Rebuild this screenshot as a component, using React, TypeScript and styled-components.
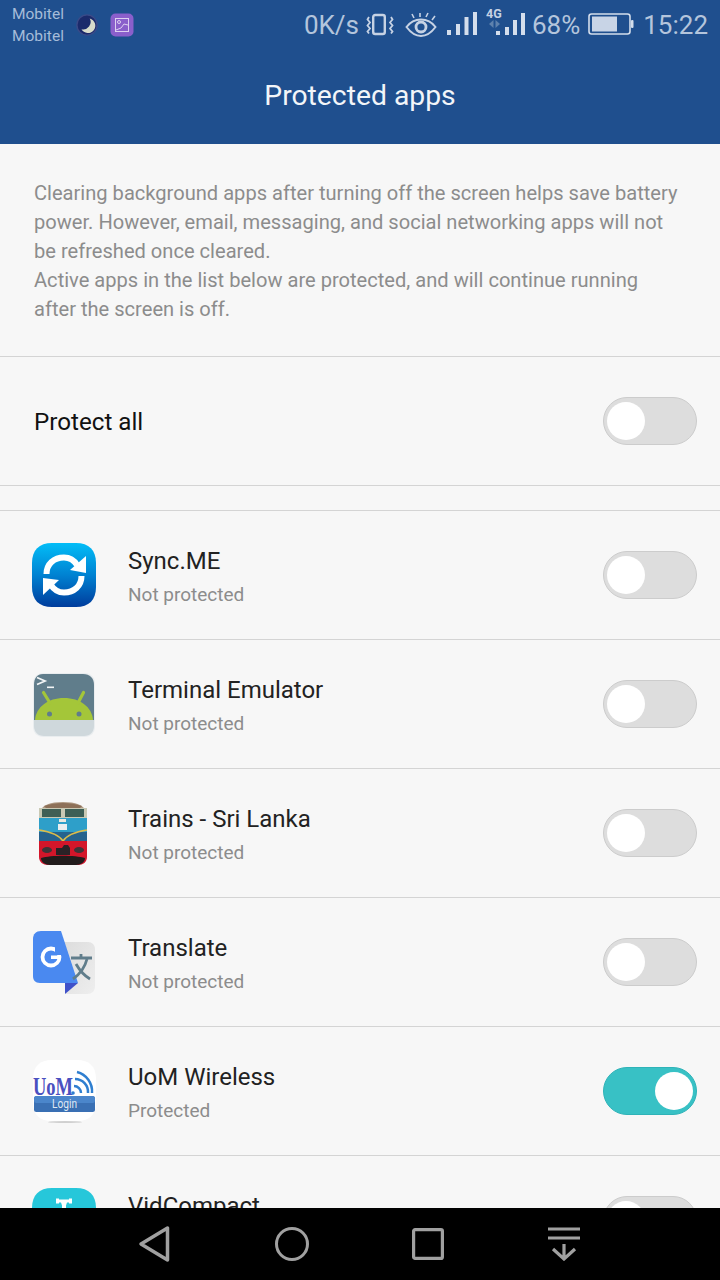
import React from "react";
import styled, { createGlobalStyle } from "styled-components";

const Global = createGlobalStyle`
  html, body { margin: 0; padding: 0; background: #f7f7f7; }
  * { box-sizing: border-box; }
`;

const Screen = styled.div`
  width: 720px; height: 1280px; display: flex; flex-direction: column; overflow: hidden;
  background: #f7f7f7; font-family: Roboto, "Liberation Sans", sans-serif;
`;
const Top = styled.header`
  height: 144px; flex: none; background: #1f4f8e; display: flex; flex-direction: column;
`;
const StatusBar = styled.div`
  height: 48px; flex: none; display: flex; align-items: center; padding: 2px 12px 0 12px; color: #c6d2e4;
`;
const Carriers = styled.div`
  display: flex; flex-direction: column; font-size: 15.5px; line-height: 22px; color: #a5bcd9; margin-top: -1px;
`;
const StatusLeft = styled.div`
  display: flex; align-items: center; gap: 12px; flex: 1;
`;
const StatusRight = styled.div`
  display: flex; align-items: center; font-size: 26px; color: #b4c5dc;
`;
const Gap = styled.span<{ $w: number }>`
  display: inline-block; width: ${(p) => p.$w}px;
`;
const Title = styled.h1`
  margin: 0; text-align: center; font-size: 28.3px; font-weight: 400; color: #f2f5f9; line-height: 96px;
`;
const Scroll = styled.main`
  flex: 1; min-height: 0; overflow: hidden;
`;
const Intro = styled.section`
  height: 213px; padding: 35px 38px 0 34px; border-bottom: 1px solid #d4d4d4; font-size: 20.1px; line-height: 29px; color: #8c8c8c;
`;
const ProtectRow = styled.div`
  height: 129px; display: flex; align-items: center; justify-content: space-between; padding: 0 23px 0 34px;
  border-bottom: 1px solid #d4d4d4;
`;
const ProtectLabel = styled.span`
  font-size: 24.2px; color: #111; margin-top: 2px;
`;
const Spacer = styled.div`
  height: 25px; border-bottom: 1px solid #d4d4d4;
`;
const AppRow = styled.div`
  height: 129px; display: flex; align-items: center; padding: 0 23px 0 32px; border-bottom: 1px solid #d4d4d4;
`;
const AppIcon = styled.div`
  width: 64px; height: 64px; flex: none; margin-right: 32px;
  svg { display: block; overflow: visible; }
`;
const AppText = styled.div`
  flex: 1; display: flex; flex-direction: column; margin-top: 2px;
`;
const AppName = styled.div`
  font-size: 24px; line-height: 34px; color: #222;
`;
const AppSub = styled.div`
  font-size: 19px; line-height: 28px; color: #8c8c8c; margin-top: 3px;
`;
const Toggle = styled.div<{ $on?: boolean }>`
  width: 94px; height: 48px; flex: none; border-radius: 24px; display: flex; align-items: center; padding: 0 3px;
  justify-content: ${(p) => (p.$on ? "flex-end" : "flex-start")};
  background: ${(p) => (p.$on ? "#38c1c5" : "#dddddd")};
  border: 1px solid ${(p) => (p.$on ? "#2fb3b8" : "#cccccc")};
`;
const Knob = styled.div`
  width: 38px; height: 38px; border-radius: 50%; background: #fff;
`;
const NavBar = styled.nav`
  height: 72px; flex: none; background: #000; display: flex; align-items: center; padding: 0 0 0 136px;
`;
const NavSlot = styled.div<{ $w: number }>`
  width: ${(p) => p.$w}px; flex: none; display: flex; svg { display: block; }
`;

const Moon = () => (
  <svg width="22" height="22" viewBox="0 0 24 24">
    <circle cx="12" cy="12" r="11" fill="#1b2a6b" stroke="#3a4a88" strokeWidth="1.5" />
    <path d="M15 5a8 8 0 0 1-9 11.5A8 8 0 1 0 15 5z" fill="#d8dccb" />
  </svg>
);
const Gallery = () => (
  <svg width="24" height="24" viewBox="0 0 24 24">
    <rect x="0.5" y="0.5" width="23" height="23" rx="5" fill="#8a5fcb" />
    <rect x="5.5" y="5.5" width="13" height="13" fill="none" stroke="#dcd0f0" strokeWidth="1" />
    <circle cx="9" cy="9" r="1.5" fill="none" stroke="#dcd0f0" />
    <path d="M6 17l5-2 3-4 4 1" fill="none" stroke="#dcd0f0" />
  </svg>
);
const Vibrate = () => (
  <svg width="28" height="24" viewBox="0 0 28 24" fill="none" stroke="#c6d2e4">
    <rect x="7.2" y="2" width="11.6" height="19" rx="2" strokeWidth="2.4" />
    <path d="M3 4l-1.500 2.500 2.500 3-2.500 3 2.500 3-2.500 3 1.500 2M25 4l1.500 2.500-2.500 3 2.500 3-2.500 3 2.500 3-1.500 2" strokeWidth="1.800" />
  </svg>
);
const Eye = () => (
  <svg width="32" height="26" viewBox="0 0 32 26" fill="none" stroke="#c6d2e4" strokeWidth="2">
    <path d="M1.500 15C6 9 11 7.500 16 7.500S26 9 30.500 15C26 21 21 24 16 24S6 21 1.500 15z" />
    <circle cx="16" cy="15" r="5" strokeWidth="2.800" />
    <path d="M9 6L7 2M15 5V1M21 5l2-4M27 8l3-4" strokeWidth="1.600" />
  </svg>
);
const Signal = () => (
  <svg width="30" height="26" viewBox="0 0 30 26" fill="#d4deec">
    <rect x="0" y="18" width="4" height="5" />
    <rect x="9" y="12" width="4" height="11" />
    <rect x="17.500" y="5" width="4" height="18" />
    <rect x="26" y="0" width="4" height="23" />
  </svg>
);
const Signal4G = () => (
  <svg width="39" height="40" viewBox="0 0 39 40">
    <text x="0" y="13" fontFamily="Roboto, sans-serif" fontWeight="700" fontSize="12.500" fill="#c6d2e4">4G</text>
    <path d="M7.500 15v8l-4.500-4zM9.500 15v8l4.500-4z" fill="#5f82ad" />
    <g fill="#d4deec">
      <rect x="10" y="26" width="4" height="4" />
      <rect x="19" y="22" width="4" height="8" />
      <rect x="27" y="15" width="4" height="15" />
      <rect x="35" y="8" width="4" height="22" />
    </g>
  </svg>
);
const Battery = () => (
  <svg width="46" height="24" viewBox="0 0 46 24">
    <rect x="1" y="1" width="41" height="20" rx="2.500" fill="none" stroke="#d4deec" strokeWidth="1.600" />
    <rect x="4" y="3.500" width="25" height="15" fill="#c8d4e6" />
    <rect x="43" y="7" width="2.500" height="8" rx="1" fill="#d4deec" />
  </svg>
);

const SyncIcon = () => (
  <svg width="64" height="64" viewBox="0 0 64 64">
    <defs>
      <linearGradient id="syncG" x1="0" y1="0" x2="0" y2="1">
        <stop offset="0" stopColor="#02bdf7" />
        <stop offset="0.5" stopColor="#0082d2" />
        <stop offset="1" stopColor="#003c9c" />
      </linearGradient>
    </defs>
    <path d="M20 0H44C57 0 64 7 64 20V44C64 57 57 64 44 64H20C7 64 0 57 0 44V20C0 7 7 0 20 0Z" fill="url(#syncG)" />
    <g fill="none" stroke="#fff" strokeWidth="6">
      <path d="M14.500 31C14.500 21 22 14.500 32 14.500C38 14.500 42 17 45 22" />
      <path d="M49.500 33C49.500 43 42 49.500 32 49.500C26 49.500 22 47 19 42" />
    </g>
    <path d="M54 13V30L38 27z" fill="#fff" />
    <path d="M11 52V35L27 37z" fill="#fff" />
  </svg>
);
const TerminalIcon = () => (
  <svg width="64" height="64" viewBox="0 0 64 64">
    <path d="M12 1H52C59 1 63 5 63 12V54C63 61 59 65 52 65H12C5 65 1 61 1 54V12C1 5 5 1 12 1Z" fill="#e9edef" />
    <path d="M11 2H51C58 2 62 6 62 13V48H2V13C2 6 5 2 11 2Z" fill="#607d8b" />
    <path d="M2 48H62V54C62 60 58 64 52 64H12C6 64 2 60 2 54Z" fill="#cfd8dc" />
    <path d="M5 5.500l8 3.500-8 3.500" fill="none" stroke="#f2f5f6" strokeWidth="1.800" />
    <rect x="15" y="14.500" width="7" height="1.600" fill="#f2f5f6" />
    <path d="M3 48C4 35 16 26 32 26S60 35 61 48Z" fill="#a4c639" />
    <path d="M18 31L11.500 20.500M46 31L51.500 20.500" stroke="#a4c639" strokeWidth="3.200" strokeLinecap="round" />
    <circle cx="17.500" cy="42" r="2.500" fill="#607d8b" />
    <circle cx="47" cy="42" r="2.500" fill="#607d8b" />
  </svg>
);
const TrainIcon = () => (
  <svg width="64" height="64" viewBox="0 0 64 64">
    <defs>
      <filter id="soft"><feGaussianBlur stdDeviation="0.5" /></filter>
    </defs>
    <g filter="url(#soft)">
      <path d="M8 10C11 4 18 1 31 1S51 4 54 10V17H8z" fill="#b09a84" />
      <path d="M12 5C18 3 24 2 31 2S44 3 50 5L48 7H14z" fill="#8d6f58" />
      <rect x="7" y="7" width="48" height="10" fill="#c9c9b4" />
      <rect x="10" y="8" width="19" height="8" fill="#3f5f55" />
      <rect x="33" y="8" width="19" height="8" fill="#3d5f57" />
      <rect x="7" y="17" width="48" height="14" fill="#2f9fc9" />
      <rect x="7" y="31" width="48" height="9" fill="#27638e" />
      <path d="M7 29C20 31 27 34 31 40C35 34 42 31 55 29" fill="none" stroke="#dcbc4a" strokeWidth="1.500" />
      <path d="M7 40H55V56C55 61 51 64 46 64H16C11 64 7 61 7 56Z" fill="#d3142c" />
      <ellipse cx="15" cy="49" rx="5" ry="3" fill="#3c3438" />
      <ellipse cx="47" cy="49" rx="5" ry="3" fill="#3c3438" />
      <path d="M24 47h6l2-3h4l2 3v7H24z" fill="#2a2226" />
      <path d="M9 57C19 54 43 54 53 57C53 61 49 64 44 64H18C13 64 9 61 9 57Z" fill="#221c1e" />
      <rect x="26" y="23" width="9" height="6" fill="#e8eef0" />
      <rect x="27" y="18" width="7" height="3" fill="#e8e8e0" />
    </g>
  </svg>
);
const TranslateIcon = () => (
  <svg width="64" height="64" viewBox="0 0 64 64">
    <defs>
      <linearGradient id="pageG" x1="0" y1="0" x2="1" y2="1">
        <stop offset="0" stopColor="#dcdcdc" />
        <stop offset="1" stopColor="#eeeeee" />
      </linearGradient>
    </defs>
    <path d="M30 12H56C60 12 63 15 63 19V56C63 61 60 64 55 64H34z" fill="url(#pageG)" />
    <path d="M33 53H46L33 64z" fill="#3f51c9" />
    <path d="M9 1H29L46 53H8C3 53 1 50 1 46V9C1 4 4 1 9 1Z" fill="#4a89f0" />
    <circle cx="19" cy="27" r="8.500" fill="none" stroke="#fff" strokeWidth="3.800" />
    <rect x="19" y="25.500" width="10" height="3.500" fill="#fff" />
    <rect x="23" y="17" width="7" height="8" fill="#4a89f0" />
    <g fill="none" stroke="#607d8b" strokeWidth="2.800">
      <path d="M39 28H60M49 24V28" />
      <path d="M41 49C48 44 53 37 55 29M44 34C48 41 53 46 58 49" />
    </g>
  </svg>
);
const UomIcon = () => (
  <svg width="64" height="64" viewBox="0 0 64 64">
    <path d="M20 1H45C57 1 64 7 64 20V44C64 56 57 62 45 62H20C8 62 1 56 1 44V20C1 7 8 1 20 1Z" fill="#fff" />
    <ellipse cx="33" cy="63" rx="17" ry="0.800" fill="#c4c4c4" />
    <text x="1" y="36" fontFamily="Liberation Serif, serif" fontWeight="700" fontSize="25" fill="#4a50c0" textLength="40" lengthAdjust="spacingAndGlyphs">UoM</text>
    <circle cx="41" cy="34" r="1.800" fill="#2f7fd0" />
    <g fill="none" stroke="#2f7fd0" strokeWidth="2.500">
      <path d="M42 27a7 7 0 0 1 7 7" />
      <path d="M43 20a13 13 0 0 1 13 14" />
      <path d="M45 13a20 20 0 0 1 15 21" />
    </g>
    <rect x="2" y="37" width="61" height="16" rx="2.500" fill="#3a70b4" />
    <rect x="2" y="37" width="61" height="7" rx="2.500" fill="#4b86cb" />
    <text x="20" y="49" fontFamily="Roboto, sans-serif" fontSize="12" fill="#dfe8f3" textLength="25" lengthAdjust="spacingAndGlyphs">Login</text>
  </svg>
);
const VidIcon = () => (
  <svg width="64" height="64" viewBox="0 0 64 64">
    <path d="M20 0H44C57 0 64 7 64 20V44C64 57 57 64 44 64H20C7 64 0 57 0 44V20C0 7 7 0 20 0Z" fill="#26c7da" />
    <path d="M24 10.500h3v1h10v-1h3v5h-3v-1l-2 0 -1 3v3h-4v-3l-1-3-2 0v1h-3z" fill="#fff" />
  </svg>
);

const apps = [
  { name: "Sync.ME", sub: "Not protected", icon: <SyncIcon /> },
  { name: "Terminal Emulator", sub: "Not protected", icon: <TerminalIcon /> },
  { name: "Trains - Sri Lanka", sub: "Not protected", icon: <TrainIcon /> },
  { name: "Translate", sub: "Not protected", icon: <TranslateIcon /> },
  { name: "UoM Wireless", sub: "Protected", icon: <UomIcon />, on: true },
  { name: "VidCompact", sub: "Not protected", icon: <VidIcon /> },
];

export default function App() {
  return (
    <Screen>
      <Global />
      <Top>
        <StatusBar>
          <StatusLeft>
            <Carriers>
              <span>Mobitel</span>
              <span>Mobitel</span>
            </Carriers>
            <Moon />
            <Gallery />
          </StatusLeft>
          <StatusRight>
            <span>0K/s</span>
            <Gap $w={7} />
            <Vibrate />
            <Gap $w={11} />
            <Eye />
            <Gap $w={10} />
            <Signal />
            <Gap $w={9} />
            <Signal4G />
            <Gap $w={7} />
            <span>68%</span>
            <Gap $w={8} />
            <Battery />
            <Gap $w={9} />
            <span>15:22</span>
          </StatusRight>
        </StatusBar>
        <Title>Protected apps</Title>
      </Top>
      <Scroll>
        <Intro>
          Clearing background apps after turning off the screen helps save battery power. However, email, messaging, and social networking apps will not be refreshed once cleared.
          <br />
          Active apps in the list below are protected, and will continue running after the screen is off.
        </Intro>
        <ProtectRow>
          <ProtectLabel>Protect all</ProtectLabel>
          <Toggle>
            <Knob />
          </Toggle>
        </ProtectRow>
        <Spacer />
        {apps.map((a) => (
          <AppRow key={a.name}>
            <AppIcon>{a.icon}</AppIcon>
            <AppText>
              <AppName>{a.name}</AppName>
              <AppSub>{a.sub}</AppSub>
            </AppText>
            <Toggle $on={a.on}>
              <Knob />
            </Toggle>
          </AppRow>
        ))}
      </Scroll>
      <NavBar>
        <NavSlot $w={139}>
          <svg width="40" height="40" viewBox="0 0 40 40" fill="none" stroke="#a0a0a0" strokeWidth="3.500" strokeLinejoin="round">
            <path d="M31.500 4V36L5 20Z" />
          </svg>
        </NavSlot>
        <NavSlot $w={137}>
          <svg width="34" height="34" viewBox="0 0 34 34" fill="none" stroke="#a0a0a0" strokeWidth="3">
            <circle cx="17" cy="17" r="15.500" />
          </svg>
        </NavSlot>
        <NavSlot $w={136}>
          <svg width="32" height="32" viewBox="0 0 32 32" fill="none" stroke="#a0a0a0" strokeWidth="3.200" strokeLinejoin="round">
            <rect x="1.600" y="1.600" width="28.800" height="28.800" rx="1.500" />
          </svg>
        </NavSlot>
        <NavSlot $w={40}>
          <svg width="32" height="34" viewBox="0 0 32 34" fill="none" stroke="#a0a0a0" strokeWidth="3.200">
            <path d="M0 2H32M0 11H32M16 17V32M5 22L16 32L27 22" />
          </svg>
        </NavSlot>
      </NavBar>
    </Screen>
  );
}
